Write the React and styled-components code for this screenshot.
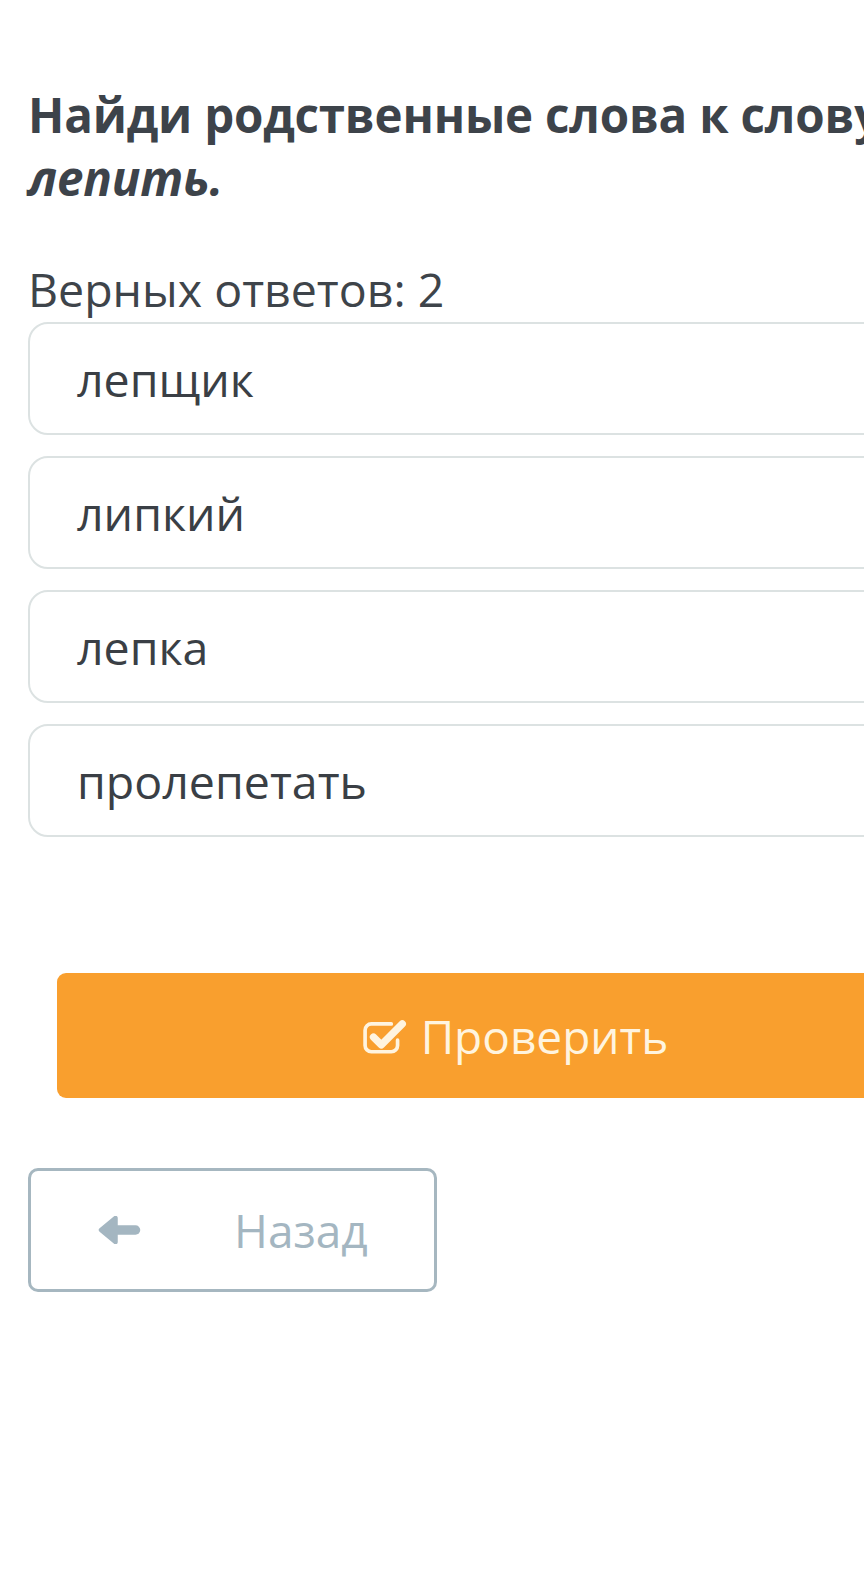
import styled, { createGlobalStyle } from 'styled-components';

const GlobalStyle = createGlobalStyle`
  html, body {
    margin: 0;
    padding: 0;
    background: #ffffff;
    overflow: hidden;
  }
  body {
    font-family: "Open Sans", "Noto Sans", sans-serif;
  }
`;

const Page = styled.div`
  width: 1031px;
  box-sizing: border-box;
  padding: 83px 28px 200px;
`;

const Title = styled.h1`
  margin: 0;
  font-size: 47.5px;
  line-height: 63px;
  font-weight: 700;
  color: #3d434a;
  letter-spacing: -0.2px;
`;

const Word = styled.em`
  font-style: italic;
`;

const Hint = styled.div`
  margin-top: 53px;
  font-size: 46.5px;
  line-height: 55px;
  color: #3e444a;
`;

const Options = styled.div`
  display: flex;
  flex-direction: column;
  gap: 21px;
  margin-top: 5px;
`;

const Option = styled.div`
  display: flex;
  align-items: center;
  box-sizing: border-box;
  height: 113px;
  padding-left: 47px;
  border: 2px solid #dce2e2;
  border-radius: 20px;
  font-size: 46.5px;
  color: #3a3f45;
  background: #fff;
`;

const CheckButton = styled.button`
  display: flex;
  align-items: center;
  justify-content: center;
  gap: 14px;
  width: calc(100% - 58px);
  height: 125px;
  margin: 136px 0 0 29px;
  border: none;
  border-radius: 9px;
  background: #f99f2e;
  color: #fff4df;
  font-family: "Open Sans", sans-serif;
  font-size: 46px;
`;

const BackButton = styled.button`
  display: flex;
  align-items: center;
  box-sizing: border-box;
  width: 409px;
  height: 124px;
  margin-top: 70px;
  padding: 0 0 0 67px;
  gap: 93px;
  border: 3px solid #a6b7c0;
  border-radius: 10px;
  background: #fff;
  color: #a4b6c1;
  font-family: "Open Sans", sans-serif;
  font-size: 46px;
`;

function CheckIcon() {
  return (
    <svg width="44" height="36" viewBox="0 0 42 34">
      <path
        d="M27 5.5 H8 A6 6 0 0 0 2 11.5 V26 A6 6 0 0 0 8 32 H27 A6 6 0 0 0 33 26 V21"
        fill="none"
        stroke="currentColor"
        strokeWidth="3.5"
        strokeLinecap="round"
      />
      <polyline
        points="10,18 17.5,25.5 37.5,5.5"
        fill="none"
        stroke="currentColor"
        strokeWidth="7"
        strokeLinecap="round"
        strokeLinejoin="round"
      />
    </svg>
  );
}

function ArrowIcon() {
  return (
    <svg width="43" height="28" viewBox="0 0 43 28">
      <line x1="14" y1="14" x2="37.5" y2="14" stroke="currentColor" strokeWidth="9.5" strokeLinecap="round" />
      <polygon
        points="3,14 17.5,2 17.5,26"
        fill="currentColor"
        stroke="currentColor"
        strokeWidth="4.5"
        strokeLinejoin="round"
      />
    </svg>
  );
}

const options = ['лепщик', 'липкий', 'лепка', 'пролепетать'];

export default function App() {
  return (
    <Page>
      <GlobalStyle />
      <Title>
        Найди родственные слова к слову <Word>лепить.</Word>
      </Title>
      <Hint>Верных ответов: 2</Hint>
      <Options>
        {options.map((o) => (
          <Option key={o}>{o}</Option>
        ))}
      </Options>
      <CheckButton>
        <CheckIcon />
        Проверить
      </CheckButton>
      <BackButton>
        <ArrowIcon />
        Назад
      </BackButton>
    </Page>
  );
}
